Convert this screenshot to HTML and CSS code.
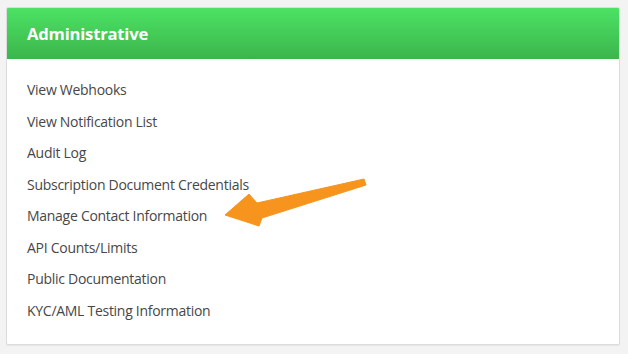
FILE: index.html
```html
<!DOCTYPE html>
<html>
<head>
<meta charset="utf-8">
<link rel="stylesheet" href="styles.css">
</head>
<body>
<div class="page">
  <div class="card">
    <div class="card-header">Administrative</div>
    <ul class="links">
      <li>View Webhooks</li>
      <li>View Notification List</li>
      <li>Audit Log</li>
      <li>Subscription Document Credentials</li>
      <li>Manage Contact Information</li>
      <li>API Counts/Limits</li>
      <li>Public Documentation</li>
      <li>KYC/AML Testing Information</li>
    </ul>
  </div>
</div>
<svg class="arrow" width="628" height="354" viewBox="0 0 628 354">
  <polygon points="225,215 249,194 257,203 364,179 366,185 262,218 259,226" fill="#f7941d" stroke="#f7941d" stroke-width="1" stroke-linejoin="round"/>
</svg>
</body>
</html>
```
FILE: styles.css
```css
html, body {
  margin: 0;
  padding: 0;
  background: #f3f3f3;
  width: 628px;
  height: 354px;
  overflow: hidden;
}
.page {
  padding: 7px 8px 0 6px;
}
.card {
  width: 612px;
  height: 336px;
  background: #fff;
  border: 1px solid #dcdcdc;
  border-radius: 2px;
  box-shadow: 0 1px 1px rgba(0,0,0,0.06);
  overflow: hidden;
}
.card-header {
  height: 51px;
  box-sizing: border-box;
  padding-left: 20px;
  display: flex;
  align-items: center;
  background: linear-gradient(#4ce264, #3cb54c);
  color: #fff;
  font-family: "Open Sans", sans-serif;
  font-weight: 700;
  font-size: 16.6px;
  letter-spacing: -0.2px;
}
.links {
  list-style: none;
  margin: 0;
  padding: 15px 0 0 20px;
  font-family: "Open Sans", sans-serif;
  font-size: 14px;
  line-height: 31.5px;
  color: #474747;
  letter-spacing: -0.28px;
}
.arrow {
  position: absolute;
  left: 0;
  top: 0;
}
```
